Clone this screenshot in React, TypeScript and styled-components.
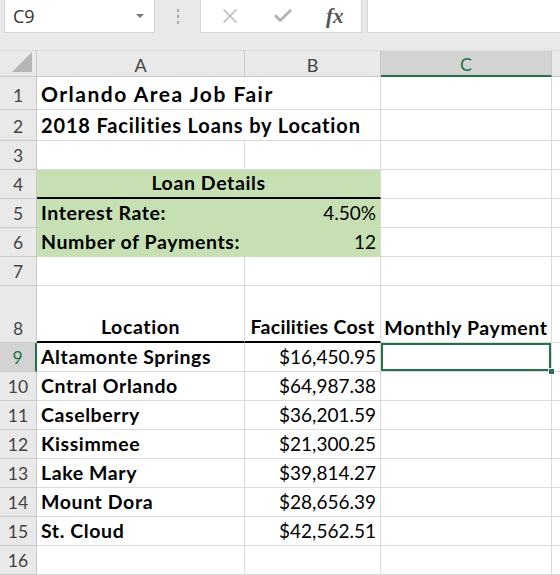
import React from 'react';
import styled, {createGlobalStyle} from 'styled-components';
import {X, Check} from 'lucide-react';

const GlobalStyle = createGlobalStyle`
  html, body {
    margin: 0;
    padding: 0;
    background: #fff;
    overflow: hidden;
  }
  * { box-sizing: border-box; }
`;

const GREEN = '#217346';
const GRID = '#dadada';
const HEAD_BG = '#e9e9e9';
const HEAD_LINE = '#c9c9c9';

const Window = styled.div`
  width: 560px;
  height: 575px;
  display: flex;
  flex-direction: column;
  background: ${HEAD_BG};
  font-family: Lato, "Open Sans", sans-serif;
`;

const FormulaBar = styled.div`
  height: 50px;
  display: flex;
  align-items: flex-start;
  padding-left: 4px;
`;

const NameBox = styled.div`
  width: 151px;
  height: 33px;
  background: #fff;
  border: 1px solid #d6d6d6;
  border-top: none;
  display: flex;
  align-items: center;
  justify-content: space-between;
  padding: 0 10px 0 8px;
  font-family: "Open Sans", "Noto Sans", sans-serif;
  font-size: 18px;
  color: #333;
`;

const DropArrow = styled.span`
  width: 0;
  height: 0;
  border-left: 4px solid transparent;
  border-right: 4px solid transparent;
  border-top: 4px solid #777;
`;

const Grip = styled.div`
  width: 45px;
  height: 33px;
  display: flex;
  flex-direction: column;
  align-items: center;
  justify-content: center;
  gap: 3px;
  > span {
    width: 2px;
    height: 3px;
    background: #a8a8a8;
  }
`;

const ButtonBox = styled.div`
  width: 162px;
  height: 33px;
  background: #fff;
  border: 1px solid #d6d6d6;
  border-top: none;
  display: flex;
  align-items: center;
  padding-left: 17px;
  gap: 30px;
  color: #b3b3b3;
`;

const Fx = styled.span`
  font-family: "Liberation Serif", serif;
  font-style: italic;
  font-weight: 700;
  font-size: 21px;
  color: #555;
  margin-left: 2px;
`;

const FormulaInput = styled.div`
  flex: 1;
  height: 33px;
  margin-left: 5px;
  background: #fff;
  border: 1px solid #d6d6d6;
  border-top: none;
  border-right: none;
`;

const Sheet = styled.div`
  display: grid;
  grid-template-columns: 37px 208px 136px 171px 1fr;
  grid-template-rows: 27px 33px 31px 29px 29px 29px 29px 29px 57px repeat(8, 29px);
  background: #fff;
`;

const Corner = styled.div`
  background: ${HEAD_BG};
  border-right: 1px solid ${HEAD_LINE};
  border-bottom: 1px solid ${HEAD_LINE};
  border-top: 1px solid #dcdcdc;
  display: flex;
  align-items: flex-end;
  justify-content: flex-end;
  padding: 0 4px 4px 0;
`;

const ColHead = styled.div<{ $active?: boolean }>`
  background: ${p => p.$active ? '#d3d3d3' : HEAD_BG};
  border-top: 1px solid #dcdcdc;
  border-right: 1px solid ${HEAD_LINE};
  border-bottom: ${p => p.$active ? `2px solid ${GREEN}` : `1px solid ${HEAD_LINE}`};
  color: ${p => p.$active ? GREEN : '#444'};
  font-size: 18px;
  display: flex;
  align-items: center;
  justify-content: center;
  padding-top: 2px;
`;

const RowHead = styled.div<{ $active?: boolean }>`
  background: ${p => p.$active ? '#d3d3d3' : HEAD_BG};
  border-right: ${p => p.$active ? `2px solid ${GREEN}` : `1px solid ${HEAD_LINE}`};
  border-bottom: 1px solid ${HEAD_LINE};
  color: ${p => p.$active ? GREEN : '#444'};
  font-size: 17.5px;
  display: flex;
  align-items: flex-end;
  justify-content: center;
  padding-bottom: 3px;
`;

type Align = 'left' | 'center' | 'right';

// $size / $track let the title rows run a little larger than the body text
const Cell = styled.div<{
  $align?: Align;
  $bold?: boolean;
  $fill?: string;
  $span?: number;
  $rule?: boolean;
  $size?: number;
  $track?: number;
  $noRight?: boolean;
}>`
  grid-column: span ${p => p.$span || 1};
  background: ${p => p.$fill || '#fff'};
  border-right: 1px solid ${p => p.$noRight ? (p.$fill || '#fff') : GRID};
  border-bottom: ${p => p.$rule ? '2px solid #000' : `1px solid ${p.$fill || GRID}`};
  display: flex;
  align-items: flex-end;
  justify-content: ${p => p.$align === 'right' ? 'flex-end' : p.$align === 'center' ? 'center' : 'flex-start'};
  padding: 0 4px 3px 4px;
  font-size: ${p => p.$size || (p.$bold ? 19.5 : 19)}px;
  font-weight: ${p => p.$bold ? 700 : 400};
  letter-spacing: ${p => p.$track ?? (p.$bold ? 0.6 : 0)}px;
  color: #000;
  white-space: nowrap;
  overflow: visible;
  min-width: 0;
`;

const Selected = styled(Cell)`
  position: relative;
  box-shadow: inset 0 0 0 2px ${GREEN};
`;

const FillHandle = styled.span`
  position: absolute;
  right: -4px;
  bottom: -4px;
  width: 7px;
  height: 7px;
  background: ${GREEN};
  border: 1px solid #fff;
`;

const FILL = '#c6e0b4';

const locations: [string, string][] = [
  ['Altamonte Springs', '$16,450.95'],
  ['Cntral Orlando', '$64,987.38'],
  ['Caselberry', '$36,201.59'],
  ['Kissimmee', '$21,300.25'],
  ['Lake Mary', '$39,814.27'],
  ['Mount Dora', '$28,656.39'],
  ['St. Cloud', '$42,562.51'],
];

function App() {
  return (
    <>
      <GlobalStyle/>
      <Window>
        <FormulaBar>
          <NameBox>C9<DropArrow/></NameBox>
          <Grip><span/><span/><span/></Grip>
          <ButtonBox>
            <X size={24} strokeWidth={1.4}/>
            <Check size={22} strokeWidth={3}/>
            <Fx>fx</Fx>
          </ButtonBox>
          <FormulaInput/>
        </FormulaBar>
        <Sheet>
          <Corner>
            <svg width="20" height="20" viewBox="0 0 20 20">
              <polygon points="20,0 20,20 0,20" fill="#b5b5b5"/>
            </svg>
          </Corner>
          <ColHead>A</ColHead>
          <ColHead>B</ColHead>
          <ColHead $active>C</ColHead>
          <ColHead/>

          <RowHead>1</RowHead>
          <Cell $span={2} $bold $size={21} $track={1.5}>Orlando Area Job Fair</Cell>
          <Cell/><Cell/>

          <RowHead>2</RowHead>
          <Cell $span={2} $bold $size={20} $track={0.85}>2018 Facilities Loans by Location</Cell>
          <Cell/><Cell/>

          <RowHead>3</RowHead>
          <Cell/><Cell/><Cell/><Cell/>

          <RowHead>4</RowHead>
          <Cell $span={2} $bold $fill={FILL} $align="center" $rule>Loan Details</Cell>
          <Cell/><Cell/>

          <RowHead>5</RowHead>
          <Cell $bold $fill={FILL} $noRight>Interest Rate:</Cell>
          <Cell $fill={FILL} $align="right">4.50%</Cell>
          <Cell/><Cell/>

          <RowHead>6</RowHead>
          <Cell $bold $fill={FILL} $noRight>Number of Payments:</Cell>
          <Cell $fill={FILL} $align="right">12</Cell>
          <Cell/><Cell/>

          <RowHead>7</RowHead>
          <Cell/><Cell/><Cell/><Cell/>

          <RowHead>8</RowHead>
          <Cell $bold $align="center" $rule>Location</Cell>
          <Cell $bold $align="center" $rule $track={0.3}>Facilities Cost</Cell>
          <Cell $bold $align="center">Monthly Payment</Cell>
          <Cell/>

          {locations.map(([name, cost], i) => (
            <React.Fragment key={name}>
              <RowHead $active={i === 0}>{9 + i}</RowHead>
              <Cell $bold>{name}</Cell>
              <Cell $align="right">{cost}</Cell>
              {i === 0 ? <Selected><FillHandle/></Selected> : <Cell/>}
              <Cell/>
            </React.Fragment>
          ))}

          <RowHead>16</RowHead>
          <Cell/><Cell/><Cell/><Cell/>
        </Sheet>
      </Window>
    </>
  );
}

export default App;
